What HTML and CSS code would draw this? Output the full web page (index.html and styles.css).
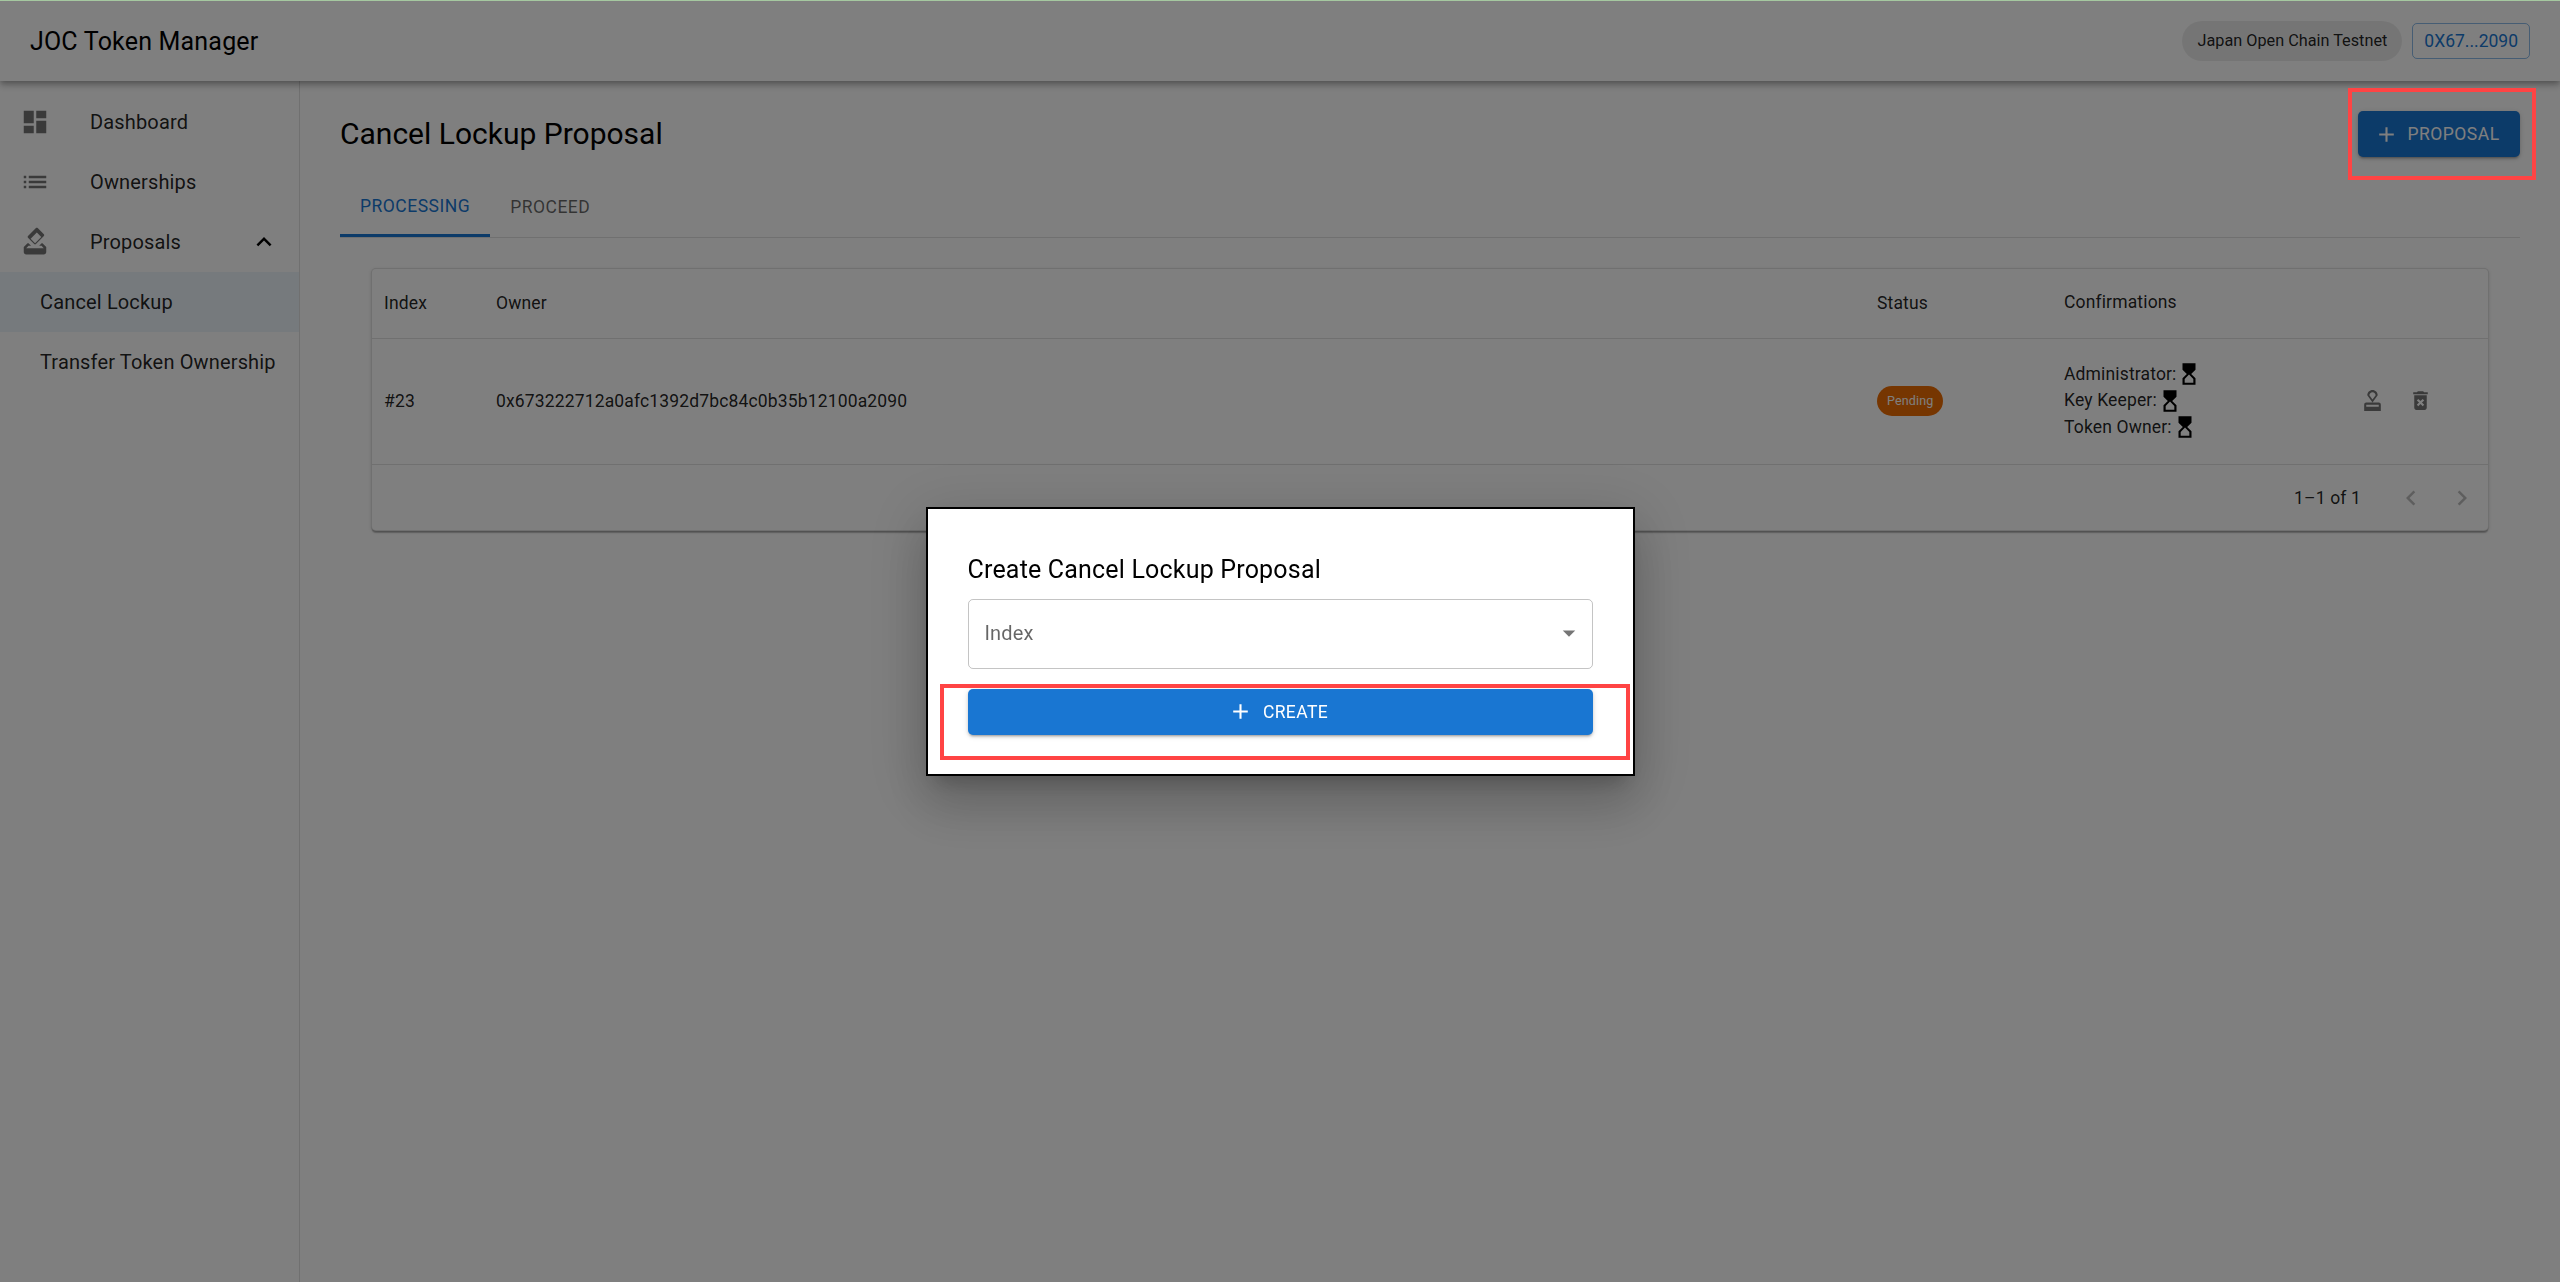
FILE: index.html
```html
<!DOCTYPE html>
<html lang="en">
<head>
    <meta charset="UTF-8">
    <meta name="viewport" content="width=device-width, initial-scale=1.0">
    <title>JOC Token Manager</title>
    <link rel="stylesheet" href="styles.css">
</head>
<body>
    <header class="appbar">
        <div class="brand">JOC Token Manager</div>
        <div class="appbar-right">
            <span class="network-chip">Japan Open Chain Testnet</span>
            <button class="wallet-btn">0X67...2090</button>
        </div>
    </header>

    <div class="layout">
        <nav class="sidebar">
            <div class="nav-item">
                <svg class="nav-icon" viewBox="0 0 24 24"><path d="M3 13h8V3H3v10zm0 8h8v-6H3v6zm10 0h8V11h-8v10zm0-18v6h8V3h-8z"/></svg>
                <span>Dashboard</span>
            </div>
            <div class="nav-item">
                <svg class="nav-icon" viewBox="0 0 24 24"><path d="M3 13h2v-2H3v2zm0 4h2v-2H3v2zm0-8h2V7H3v2zm4 4h14v-2H7v2zm0 4h14v-2H7v2zM7 7v2h14V7H7z"/></svg>
                <span>Ownerships</span>
            </div>
            <div class="nav-item">
                <svg class="nav-icon" viewBox="0 0 24 24"><path d="M18 13h-.68l-2 2h1.91L19 17H5l1.78-2h2.05l-2-2H6l-3 3v4c0 1.1.89 2 1.99 2H19c1.1 0 2-.89 2-2v-4l-3-3zm-1-5.05-4.95 4.95-3.54-3.54 4.95-4.95L17 7.95zm-4.24-7.07L6.39 7.25c-.39.39-.39 1.02 0 1.41l4.95 4.95c.39.39 1.02.39 1.41 0l6.36-6.36c.39-.39.39-1.02 0-1.41L14.16.88c-.38-.39-1.01-.39-1.4 0z"/></svg>
                <span>Proposals</span>
                <svg class="nav-chevron" viewBox="0 0 24 24"><path d="m12 8-6 6 1.41 1.41L12 10.83l4.59 4.58L18 14z"/></svg>
            </div>
            <div class="nav-sub nav-sub-active">Cancel Lockup</div>
            <div class="nav-sub">Transfer Token Ownership</div>
        </nav>

        <main class="content">
            <div class="page-head">
                <h1 class="page-title">Cancel Lockup Proposal</h1>
                <button class="btn btn-contained btn-proposal">
                    <svg class="btn-icon" viewBox="0 0 24 24"><path d="M19 13h-6v6h-2v-6H5v-2h6V5h2v6h6v2z"/></svg>
                    Proposal
                </button>
            </div>

            <div class="tabs">
                <div class="tab tab-active">Processing</div>
                <div class="tab">Proceed</div>
            </div>

            <section class="card">
                <div class="row row-head">
                    <div class="col-index">Index</div>
                    <div class="col-owner">Owner</div>
                    <div class="col-status">Status</div>
                    <div class="col-conf">Confirmations</div>
                </div>
                <div class="row row-body">
                    <div class="col-index">#23</div>
                    <div class="col-owner">0x673222712a0afc1392d7bc84c0b35b12100a2090</div>
                    <div class="col-status"><span class="status-chip">Pending</span></div>
                    <div class="col-conf">
                        <div class="conf-line">Administrator:
                            <svg class="hourglass" viewBox="0 0 24 24"><path d="M6 2v6h.01L6 8.01 10 12l-4 4 .01.01H6V22h12v-5.99h-.01L18 16l-4-4 4-3.99-.01-.01H18V2H6zm10 14.5V20H8v-3.5l4-4 4 4z"/></svg>
                        </div>
                        <div class="conf-line">Key Keeper:
                            <svg class="hourglass" viewBox="0 0 24 24"><path d="M6 2v6h.01L6 8.01 10 12l-4 4 .01.01H6V22h12v-5.99h-.01L18 16l-4-4 4-3.99-.01-.01H18V2H6zm10 14.5V20H8v-3.5l4-4 4 4z"/></svg>
                        </div>
                        <div class="conf-line">Token Owner:
                            <svg class="hourglass" viewBox="0 0 24 24"><path d="M6 2v6h.01L6 8.01 10 12l-4 4 .01.01H6V22h12v-5.99h-.01L18 16l-4-4 4-3.99-.01-.01H18V2H6zm10 14.5V20H8v-3.5l4-4 4 4z"/></svg>
                        </div>
                    </div>
                    <div class="col-actions">
                        <svg class="action-icon" viewBox="0 0 24 24"><path d="M4 16v6h16v-6c0-1.1-.9-2-2-2H6c-1.1 0-2 .9-2 2zm14 2H6v-2h12v2zm-6-16C9.24 2 7 4.24 7 7l5 7 5-7c0-2.76-2.24-5-5-5zm0 9L9 7c0-1.66 1.34-3 3-3s3 1.34 3 3l-3 4z"/></svg>
                        <svg class="action-icon" viewBox="0 0 24 24"><path d="M6 19c0 1.1.9 2 2 2h8c1.1 0 2-.9 2-2V7H6v12zm2.46-7.12 1.41-1.41L12 12.59l2.12-2.12 1.41 1.41L13.41 14l2.12 2.12-1.41 1.41L12 15.41l-2.12 2.12-1.41-1.41L10.59 14l-2.13-2.12zM15.5 4l-1-1h-5l-1 1H5v2h14V4z"/></svg>
                    </div>
                </div>
                <div class="card-foot">
                    <span class="page-count">1–1 of 1</span>
                    <div class="page-arrows">
                        <svg class="page-arrow" viewBox="0 0 24 24"><path d="M15.41 7.41 14 6l-6 6 6 6 1.41-1.41L10.83 12z"/></svg>
                        <svg class="page-arrow" viewBox="0 0 24 24"><path d="M10 6 8.59 7.41 13.17 12l-4.58 4.59L10 18l6-6z"/></svg>
                    </div>
                </div>
            </section>
        </main>
    </div>

    <!-- dim layer + dialog -->
    <div class="backdrop">
        <div class="dialog">
            <h2 class="dialog-title">Create Cancel Lockup Proposal</h2>
            <div class="select">
                <span>Index</span>
                <svg class="select-arrow" viewBox="0 0 24 24"><path d="M7 10l5 5 5-5z"/></svg>
            </div>
            <button class="btn btn-contained btn-create">
                <svg class="btn-icon" viewBox="0 0 24 24"><path d="M19 13h-6v6h-2v-6H5v-2h6V5h2v6h6v2z"/></svg>
                Create
            </button>
        </div>
    </div>

    <!-- things drawn on the screenshot, above the dim layer -->
    <div class="top-line"></div>
    <div class="mark mark-proposal"></div>
    <div class="mark mark-create"></div>
</body>
</html>
```

FILE: styles.css
```css
* {
    box-sizing: border-box;
}
body {
    margin: 0;
    height: 1282px;
    overflow: hidden;
    font-family: 'Roboto', sans-serif;
    font-size: 17.5px;
    letter-spacing: 0.15px;
    color: rgba(0, 0, 0, 0.87);
    background: #fff;
}

/* App bar */
.appbar {
    height: 81px;
    padding: 0 30px;
    display: flex;
    align-items: center;
    justify-content: space-between;
    background: #fff;
    box-shadow: 0 2.5px 5px -1px rgba(0, 0, 0, 0.2), 0 5px 6px 0 rgba(0, 0, 0, 0.14), 0 1px 12px 0 rgba(0, 0, 0, 0.12);
    position: relative;
    z-index: 1;
}
.brand {
    padding-top: 2px;
    font-size: 25px;
    font-weight: 400;
    letter-spacing: 0.19px;
    color: #000;
}
.appbar-right {
    display: flex;
    align-items: center;
    gap: 10px;
}
.network-chip {
    height: 40px;
    padding: 0 15px;
    display: flex;
    align-items: center;
    border-radius: 20px;
    font-size: 16.25px;
    letter-spacing: 0;
    background: rgba(0, 0, 0, 0.08);
}
.wallet-btn {
    height: 36px;
    padding: 0 11px;
    font-family: inherit;
    font-size: 17.5px;
    letter-spacing: 0;
    color: #1976d2;
    background: none;
    border: 1px solid rgba(25, 118, 210, 0.5);
    border-radius: 5px;
}

/* Sidebar */
.layout {
    display: flex;
    height: 1201px;
}
.sidebar {
    width: 300px;
    flex-shrink: 0;
    padding-top: 11px;
    border-right: 1px solid rgba(0, 0, 0, 0.12);
    font-size: 20px;
}
.nav-item {
    height: 60px;
    padding: 0 20px;
    display: flex;
    align-items: center;
}
.nav-icon {
    width: 30px;
    height: 30px;
    margin-right: 40px;
    fill: rgba(0, 0, 0, 0.54);
}
.nav-chevron {
    width: 30px;
    height: 30px;
    margin-left: auto;
    margin-right: 0;
}
.nav-sub {
    height: 60px;
    padding-left: 40px;
    display: flex;
    align-items: center;
}
.nav-sub-active {
    background: rgba(25, 118, 210, 0.08);
}

/* Main area */
.content {
    flex: 1;
    padding: 0 40px;
}
.page-head {
    height: 96px;
    padding-top: 30px;
    display: flex;
    align-items: flex-start;
    justify-content: space-between;
}
.page-title {
    margin: 0;
    font-size: 30px;
    font-weight: 400;
    line-height: 46px;
    letter-spacing: 0;
    color: #000;
}
.btn {
    display: flex;
    align-items: center;
    justify-content: center;
    height: 46px;
    font-family: inherit;
    font-size: 17.5px;
    font-weight: 400;
    letter-spacing: 0.5px;
    text-transform: uppercase;
    border: 0;
    border-radius: 5px;
}
.btn-contained {
    color: #fff;
    background: #1976d2;
    box-shadow: 0 3px 2px -2px rgba(0, 0, 0, 0.2), 0 2px 3px 0 rgba(0, 0, 0, 0.14), 0 1px 6px 0 rgba(0, 0, 0, 0.12);
}
.btn-icon {
    width: 25px;
    height: 25px;
    margin-right: 10px;
    fill: currentColor;
}
.btn-proposal {
    width: 162px;
    padding: 0 4px 0 0;
}
.btn-proposal .btn-icon {
    margin-right: 8px;
}

/* Tabs */
.tabs {
    display: flex;
    height: 61px;
    border-bottom: 1px solid rgba(0, 0, 0, 0.12);
}
.tab {
    height: 60px;
    padding: 0 20px;
    display: flex;
    align-items: center;
    font-size: 17.5px;
    font-weight: 400;
    letter-spacing: 0.5px;
    text-transform: uppercase;
    color: rgba(0, 0, 0, 0.6);
}
.tab-active {
    color: #1976d2;
    border-bottom: 3px solid #1976d2;
}

/* Table card */
.card {
    margin: 30px 31px 0;
    height: 263px;
    border: 1px solid rgba(0, 0, 0, 0.12);
    border-radius: 5px;
    background: #fff;
    box-shadow: 0 2.5px 1px -1px rgba(0, 0, 0, 0.2), 0 1px 1px 0 rgba(0, 0, 0, 0.14), 0 1px 4px 0 rgba(0, 0, 0, 0.12);
}
.row {
    display: flex;
    align-items: center;
    padding: 0 0 2px 12px;
    border-bottom: 1px solid rgba(0, 0, 0, 0.12);
}
.row-head {
    height: 70px;
}
.row-body {
    height: 126px;
}
.col-index {
    width: 112px;
}
.col-owner {
    width: 1381px;
}
.col-status {
    width: 187px;
}
.col-conf {
    width: 297px;
    line-height: 26.25px;
}
.col-actions {
    display: flex;
    gap: 23px;
    margin-left: -1px;
}
.status-chip {
    display: inline-flex;
    align-items: center;
    height: 30px;
    padding: 0 10px;
    border-radius: 15px;
    font-size: 12.5px;
    color: #fff;
    background: #ed6c02;
}
.conf-line {
    display: flex;
    align-items: center;
    gap: 1px;
    height: 26.25px;
}
.hourglass {
    width: 26px;
    height: 26px;
    margin-left: -1px;
    fill: #000;
}
.action-icon {
    width: 25px;
    height: 25px;
    fill: rgba(0, 0, 0, 0.54);
}
.card-foot {
    height: 65px;
    display: flex;
    align-items: center;
    justify-content: flex-end;
    padding-right: 11px;
}
.page-count {
    margin-right: 35px;
}
.page-arrows {
    display: flex;
    gap: 21px;
}
.page-arrow {
    width: 30px;
    height: 30px;
    fill: rgba(0, 0, 0, 0.26);
}

/* Dialog */
.backdrop {
    position: fixed;
    inset: 0;
    z-index: 10;
    display: flex;
    align-items: center;
    justify-content: center;
    background: rgba(0, 0, 0, 0.5);
}
.dialog {
    width: 709px;
    height: 269px;
    margin-top: 1px;
    padding: 42px 40px 0;
    display: flex;
    flex-direction: column;
    background: #fff;
    border: 2.5px solid #000;
    box-shadow: 0 14px 19px -9px rgba(0, 0, 0, 0.2), 0 30px 48px 3px rgba(0, 0, 0, 0.14), 0 11px 57px 10px rgba(0, 0, 0, 0.12);
}
.dialog-title {
    margin: 0 0 10.5px;
    font-size: 25px;
    font-weight: 400;
    line-height: 37px;
    letter-spacing: 0.19px;
    color: #000;
}
.select {
    height: 70px;
    padding: 0 8px 2px 16px;
    display: flex;
    align-items: center;
    justify-content: space-between;
    border: 1px solid rgba(0, 0, 0, 0.23);
    border-radius: 5px;
    font-size: 20px;
    color: rgba(0, 0, 0, 0.6);
}
.select-arrow {
    width: 30px;
    height: 30px;
    fill: rgba(0, 0, 0, 0.54);
}
.btn-create {
    width: 100%;
    flex-shrink: 0;
    margin-top: 20px;
    padding: 0 4px 0 0;
    letter-spacing: 0.4px;
}

/* Top strip and red marks */
.top-line {
    position: fixed;
    top: 0;
    left: 0;
    width: 100%;
    height: 1px;
    z-index: 20;
    background: #a5c8a0;
}
.mark {
    position: fixed;
    z-index: 20;
    border: 4px solid #ff4444;
}
.mark-proposal {
    left: 2348px;
    top: 88px;
    width: 188px;
    height: 92px;
}
.mark-create {
    left: 940px;
    top: 684px;
    width: 690px;
    height: 76px;
}
```
